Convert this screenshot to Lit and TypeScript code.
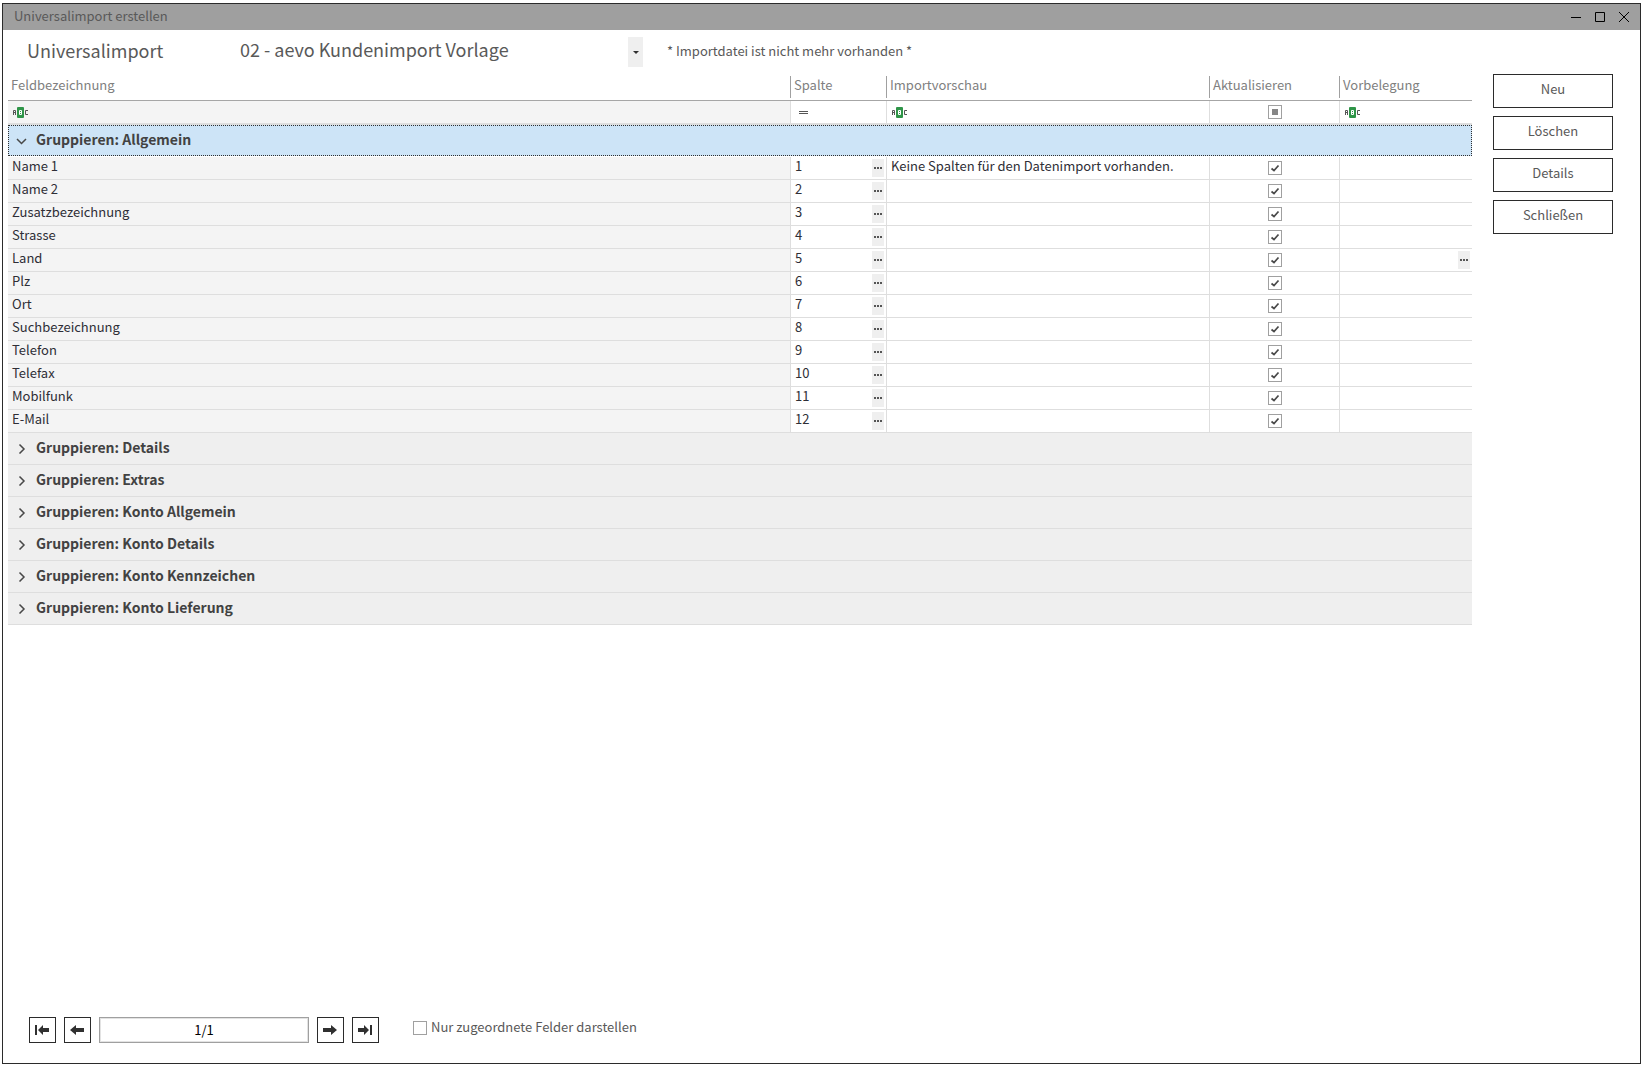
import { LitElement, html, css, svg, nothing } from "lit";
import { customElement, property, state } from "lit/decorators.js";
import { classMap } from "lit/directives/class-map.js";

interface Field {
  name: string;
  column: number;
  preview?: string;
  update: boolean;
  picker?: boolean;
}

interface Group {
  name: string;
  open: boolean;
  fields: Field[];
}

const field = (name: string, column: number, extra: Partial<Field> = {}): Field => ({
  name,
  column,
  update: true,
  ...extra,
});

const GROUPS: Group[] = [
  {
    name: "Allgemein",
    open: true,
    fields: [
      field("Name 1", 1, { preview: "Keine Spalten für den Datenimport vorhanden." }),
      field("Name 2", 2),
      field("Zusatzbezeichnung", 3),
      field("Strasse", 4),
      field("Land", 5, { picker: true }),
      field("Plz", 6),
      field("Ort", 7),
      field("Suchbezeichnung", 8),
      field("Telefon", 9),
      field("Telefax", 10),
      field("Mobilfunk", 11),
      field("E-Mail", 12),
    ],
  },
  { name: "Details", open: false, fields: [] },
  { name: "Extras", open: false, fields: [] },
  { name: "Konto Allgemein", open: false, fields: [] },
  { name: "Konto Details", open: false, fields: [] },
  { name: "Konto Kennzeichen", open: false, fields: [] },
  { name: "Konto Lieferung", open: false, fields: [] },
];

const base = css`
  *,
  *::before,
  *::after {
    box-sizing: border-box;
  }
  button,
  input,
  select {
    font: inherit;
    color: inherit;
    margin: 0;
    padding: 0;
    border: 0;
    border-radius: 0;
    background: none;
  }
  svg {
    display: block;
    flex: none;
  }
`;

@customElement("check-box")
class CheckBox extends LitElement {
  @property({ type: Boolean }) checked = false;
  @property({ type: Boolean }) mixed = false;
  @property() label = "";
  @property({ type: Boolean }) caption = false;

  static styles = [
    base,
    css`
      :host {
        display: inline-flex;
      }
      .wrap {
        display: flex;
        align-items: center;
        gap: 4px;
      }
      .box {
        display: grid;
      }
      .box > * {
        grid-area: 1 / 1;
      }
      .input {
        appearance: none;
        width: 14px;
        height: 14px;
        border: 1px solid #a0a0a0;
        background: #fff;
      }
      .mark {
        pointer-events: none;
      }
      .text {
        line-height: 16px;
        padding-bottom: 2px;
      }
    `,
  ];

  render() {
    const mark = this.mixed
      ? svg`<rect x="4" y="4" width="6" height="6" fill="#868686"></rect>`
      : this.checked
        ? svg`<path d="M3.5 7.5 L6 9.5 L10.5 4.5" fill="none" stroke="#484848" stroke-width="1.7"></path>`
        : nothing;
    return html`<label class="wrap">
      <span class="box">
        <input
          class="input"
          type="checkbox"
          aria-label=${this.label}
          .checked=${this.checked}
          .indeterminate=${this.mixed}
          @change=${(e: Event) => {
            this.mixed = false;
            this.checked = (e.target as HTMLInputElement).checked;
          }}
        />
        <svg class="mark" width="14" height="14" viewBox="0 0 14 14">${mark}</svg>
      </span>
      ${this.caption ? html`<span class="text">${this.label}</span>` : nothing}
    </label>`;
  }
}

@customElement("field-grid")
class FieldGrid extends LitElement {
  @state() private groups: Group[] = GROUPS;
  @state() private active = 0;

  static styles = [
    base,
    css`
      :host {
        display: block;
      }
      .grid {
        width: 100%;
        table-layout: fixed;
        border-collapse: separate;
        border-spacing: 0;
      }
      .c-column {
        width: 96px;
      }
      .c-preview {
        width: 323px;
      }
      .c-update {
        width: 130px;
      }
      .c-default {
        width: 132px;
      }
      .head {
        height: 25px;
        padding: 0;
        border-bottom: 1px solid #a6a6a6;
        font-weight: 400;
        text-align: left;
        vertical-align: top;
        color: #808080;
      }
      .title {
        display: block;
        height: 22px;
        padding-left: 3px;
        line-height: 18px;
        border-right: 1px solid #a0a0a0;
      }
      .head:last-child .title {
        border-right: 0;
      }
      .cell {
        height: 23px;
        padding: 0;
        border-right: 1px solid #dedede;
        border-bottom: 1px solid #dedede;
      }
      .cell:last-child {
        border-right: 0;
      }
      .cell:first-child {
        background: #f4f4f4;
      }
      .filter .cell {
        height: 24px;
        border-bottom-width: 2px;
      }
      .line {
        display: flex;
        align-items: center;
        justify-content: space-between;
        height: 22px;
        padding: 0 2px 0 4px;
        line-height: 16px;
        color: #2e2e36;
      }
      .line.center {
        justify-content: center;
        padding: 0;
      }
      .text {
        padding-bottom: 4px;
        white-space: nowrap;
      }
      .more {
        display: grid;
        place-items: center;
        width: 12px;
        height: 18px;
        margin-left: auto;
        background: #efefef;
      }
      .band {
        padding: 0;
      }
      .group {
        display: flex;
        align-items: center;
        gap: 9px;
        width: 100%;
        height: 32px;
        padding: 0 8px;
        border-bottom: 1px solid #dedede;
        background: #efefef;
        color: #424242;
        font-size: 14px;
        font-weight: 700;
        line-height: 16px;
        text-align: left;
      }
      .group.active {
        height: 31px;
        padding: 0 7px;
        margin-bottom: 1px;
        border: 1px dotted #303030;
        background: #cde4f7;
      }
      .group .name {
        padding-bottom: 4px;
      }
    `,
  ];

  private toggle(index: number) {
    this.active = index;
    this.groups = this.groups.map((g, i) => (i === index ? { ...g, open: !g.open } : g));
  }

  private textFilter() {
    return html`<svg width="17" height="14" viewBox="-1 -2 17 14" role="img" aria-label="Enthält">
      <rect x="4" y="0" width="7" height="11" rx="1" fill="#2f9548"></rect>
      <path d="M.5 8V3.5H2.5V8M.5 5.5H2.5" fill="none" stroke="#555"></path>
      <path d="M6.5 3.500H8.500V7.500H6.500ZM6.500 5.500H8.500" fill="none" stroke="#fff"></path>
      <path d="M15 3.500H12.500V7.500H15" fill="none" stroke="#555"></path>
    </svg>`;
  }

  private more(label: string) {
    return html`<button class="more" type="button" aria-label=${label}>
      <svg width="8" height="2" viewBox="0 0 8 2">
        <path d="M0 0H2V2H0ZM3 0H5V2H3ZM6 0H8V2H6Z" fill="#555"></path>
      </svg>
    </button>`;
  }

  private groupRow(group: Group, index: number) {
    return html`<tr>
      <td class="band" colspan="5">
        <button
          type="button"
          class=${classMap({ group: true, active: index === this.active })}
          aria-expanded=${group.open}
          @click=${() => this.toggle(index)}
        >
          <svg width="11" height="11" viewBox="0 0 11 11" fill="none" stroke="#484848" stroke-width="1.5">
            <path d=${group.open ? "M1 4 L5.5 8.500 L10 4" : "M3.500 1.500 L8 6 L3.500 10.500"}></path>
          </svg>
          <span class="name">Gruppieren: ${group.name}</span>
        </button>
      </td>
    </tr>`;
  }

  private fieldRow(f: Field) {
    return html`<tr>
      <td class="cell"><div class="line"><span class="text">${f.name}</span></div></td>
      <td class="cell">
        <div class="line"><span class="text">${f.column}</span>${this.more(`Spalte für ${f.name} wählen`)}</div>
      </td>
      <td class="cell"><div class="line"><span class="text">${f.preview ?? nothing}</span></div></td>
      <td class="cell">
        <div class="line center">
          <check-box .checked=${f.update} .label=${`${f.name} aktualisieren`}></check-box>
        </div>
      </td>
      <td class="cell">
        <div class="line">${f.picker ? this.more(`Vorbelegung für ${f.name} wählen`) : nothing}</div>
      </td>
    </tr>`;
  }

  render() {
    return html`<table class="grid">
      <colgroup>
        <col />
        <col class="c-column" />
        <col class="c-preview" />
        <col class="c-update" />
        <col class="c-default" />
      </colgroup>
      <thead>
        <tr>
          ${["Feldbezeichnung", "Spalte", "Importvorschau", "Aktualisieren", "Vorbelegung"].map(
            (t) => html`<th class="head" scope="col"><span class="title">${t}</span></th>`,
          )}
        </tr>
      </thead>
      <tbody>
        <tr class="filter">
          <td class="cell"><div class="line">${this.textFilter()}</div></td>
          <td class="cell">
            <div class="line">
              <svg width="18" height="12" viewBox="0 0 18 12" role="img" aria-label="Gleich">
                <path d="M4 5.500H13M4 7.500H13" stroke="#555"></path>
              </svg>
            </div>
          </td>
          <td class="cell"><div class="line">${this.textFilter()}</div></td>
          <td class="cell">
            <div class="line center"><check-box mixed label="Aktualisieren filtern"></check-box></div>
          </td>
          <td class="cell"><div class="line">${this.textFilter()}</div></td>
        </tr>
        ${this.groups.map((g, i) => [this.groupRow(g, i), g.open ? g.fields.map((f) => this.fieldRow(f)) : nothing])}
      </tbody>
    </table>`;
  }
}

@customElement("app-root")
class AppRoot extends LitElement {
  static styles = [
    base,
    css`
      :host {
        display: flex;
        min-height: 100vh;
        box-sizing: border-box;
        padding: 3px 3px 3px 2px;
        background: #fff;
        color: #595959;
        font-family: "Noto Sans CJK SC", "Noto Sans", sans-serif;
        font-size: 13px;
        line-height: 16px;
      }
      .window {
        flex: 1;
        display: flex;
        flex-direction: column;
        min-width: 0;
        border: 1px solid #2b2b2b;
      }
      .titlebar {
        display: flex;
        align-items: center;
        justify-content: space-between;
        height: 26px;
        padding: 0 4px 0 11px;
        background: #9f9f9f;
      }
      .caption {
        padding-bottom: 2px;
      }
      .controls {
        display: flex;
      }
      .control {
        display: grid;
        place-items: center;
        width: 24px;
        height: 26px;
      }
      .top {
        display: flex;
        align-items: center;
        height: 46px;
        padding: 0 24px 4px;
      }
      .heading {
        width: 213px;
        margin: 0;
        padding-bottom: 2px;
        font-size: 18px;
        font-weight: 400;
        line-height: 24px;
      }
      .picker {
        display: grid;
        grid-template-columns: 1fr 15px;
        width: 403px;
        height: 28px;
        margin-right: 24px;
      }
      .select {
        grid-area: 1 / 1 / 2 / 3;
        appearance: none;
        padding-bottom: 6px;
        font-size: 18px;
        line-height: 24px;
      }
      .arrow {
        grid-area: 1 / 2;
        display: grid;
        place-items: center;
        background: #efefef;
        pointer-events: none;
      }
      .hint {
        margin: 0;
      }
      .body {
        flex: 1;
        display: flex;
        align-items: flex-start;
        gap: 21px;
        padding: 0 27px 0 5px;
      }
      .fields {
        flex: 1;
        min-width: 0;
      }
      .actions {
        display: flex;
        flex-direction: column;
        gap: 8px;
        margin-top: -2px;
      }
      .action {
        width: 120px;
        height: 34px;
        padding-bottom: 4px;
        border: 1px solid #2b2b2b;
        background: #fff;
      }
      .footer {
        display: flex;
        align-items: center;
        gap: 8px;
        padding: 0 26px 20px;
      }
      .nav {
        display: grid;
        place-items: center;
        width: 27px;
        height: 26px;
        border: 1px solid #2b2b2b;
        background: #fff;
      }
      .page {
        width: 210px;
        height: 26px;
        padding-bottom: 2px;
        border: 1px solid #a0a0a0;
        box-shadow: inset 0 0 0 1px #e3e3e3;
        color: #000;
        text-align: center;
      }
      .only {
        margin-left: 26px;
        padding-bottom: 4px;
      }
    `,
  ];

  private nav(label: string, path: string) {
    return html`<button class="nav" type="button" aria-label=${label}>
      <svg width="15" height="12" viewBox="0 0 15 12"><path d=${path} fill="#303030"></path></svg>
    </button>`;
  }

  private control(label: string, path: string) {
    return html`<button class="control" type="button" aria-label=${label}>
      <svg width="10" height="10" viewBox="0 0 10 10"><path d=${path} fill="none" stroke="#000"></path></svg>
    </button>`;
  }

  render() {
    return html`<main class="window">
      <header class="titlebar">
        <span class="caption">Universalimport erstellen</span>
        <div class="controls">
          ${this.control("Minimieren", "M0 5.500H10")} ${this.control("Maximieren", "M.5 .5H9.500V9.500H.5Z")}
          ${this.control("Fenster schließen", "M0 0L10 10M10 0L0 10")}
        </div>
      </header>
      <section class="top">
        <h1 class="heading" id="heading">Universalimport</h1>
        <div class="picker">
          <select class="select" aria-labelledby="heading">
            <option>02 - aevo Kundenimport Vorlage</option>
          </select>
          <span class="arrow">
            <svg width="6" height="3" viewBox="0 0 6 3"><path d="M0 0H6L3 3Z" fill="#303030"></path></svg>
          </span>
        </div>
        <p class="hint">* Importdatei ist nicht mehr vorhanden *</p>
      </section>
      <section class="body">
        <field-grid class="fields"></field-grid>
        <div class="actions">
          ${["Neu", "Löschen", "Details", "Schließen"].map(
            (t) => html`<button class="action" type="button">${t}</button>`,
          )}
        </div>
      </section>
      <footer class="footer">
        ${this.nav("Erster Datensatz", "M0 1H2V11H0ZM3 6L8 1V4H14V8H8V11Z")}
        ${this.nav("Vorheriger Datensatz", "M0 6L6 1V4H14V8H6V11Z")}
        <input class="page" type="text" aria-label="Datensatz" .value=${"1/1"} />
        ${this.nav("Nächster Datensatz", "M14 6L8 1V4H0V8H8V11Z")}
        ${this.nav("Letzter Datensatz", "M14 1H12V11H14ZM11 6L6 1V4H0V8H6V11Z")}
        <check-box class="only" caption label="Nur zugeordnete Felder darstellen"></check-box>
      </footer>
    </main>`;
  }
}
